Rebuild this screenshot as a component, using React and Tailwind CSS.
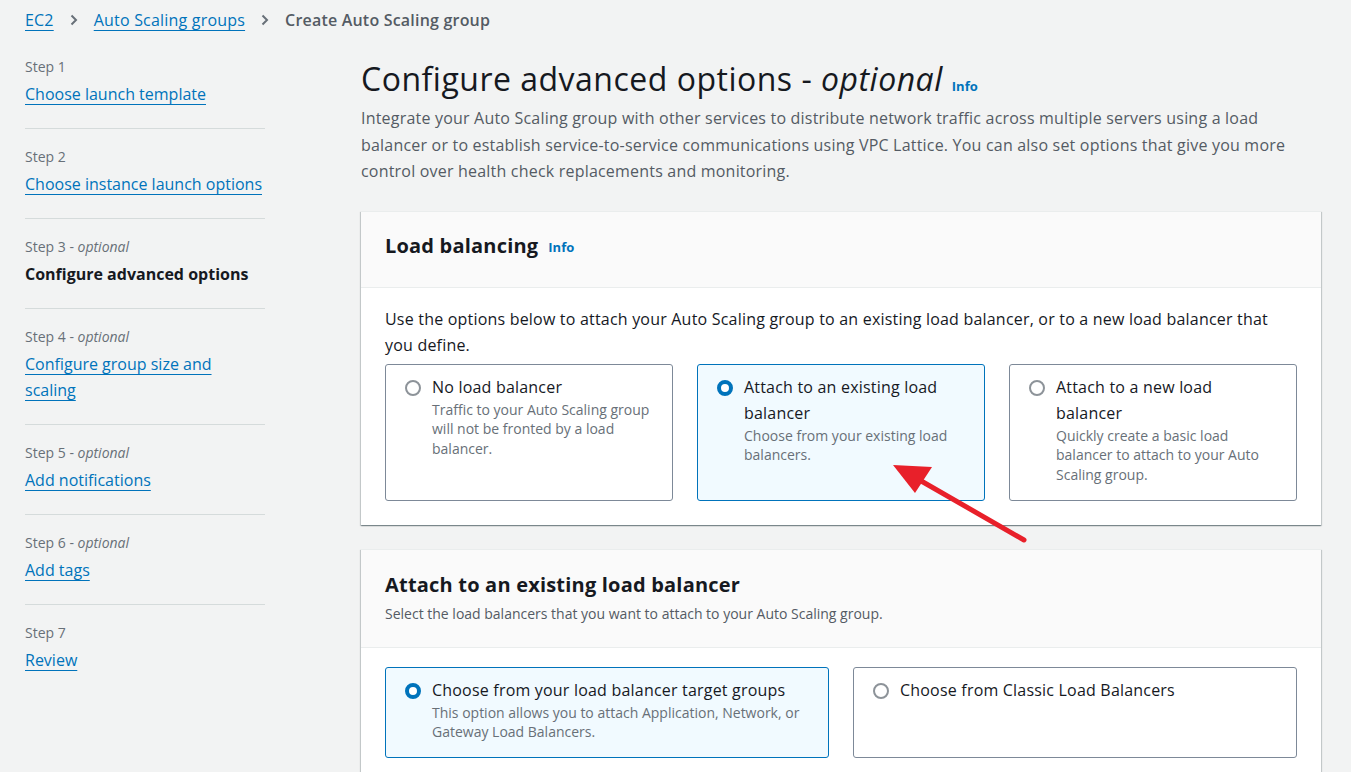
import React from 'react';

const font = { fontFamily: '"Open Sans", "Noto Sans", Arial, sans-serif' };

const steps = [
  { label: 'Step 1', title: 'Choose launch template' },
  { label: 'Step 2', title: 'Choose instance launch options' },
  { label: 'Step 3', optional: true, title: 'Configure advanced options', active: true },
  { label: 'Step 4', optional: true, title: 'Configure group size and scaling' },
  { label: 'Step 5', optional: true, title: 'Add notifications' },
  { label: 'Step 6', optional: true, title: 'Add tags' },
  { label: 'Step 7', title: 'Review' },
];

const Radio = ({ checked }) =>
  checked ? (
    <span className="mt-[6px] h-4 w-4 shrink-0 rounded-full border-[4px] border-[#0073bb] bg-white" />
  ) : (
    <span className="mt-[6px] h-4 w-4 shrink-0 rounded-full border-2 border-[#8d9399] bg-white" />
  );

const Tile = ({ checked, title, desc, className = '' }) => (
  <div
    className={`flex gap-[11px] rounded-[3px] border px-[19px] pb-[11px] pt-[9px] ${
      checked ? 'border-[#0073bb] bg-[#f1faff]' : 'border-[#7d8998] bg-white'
    } ${className}`}
  >
    <Radio checked={checked} />
    <div className="flex-1">
      <div className="text-[16px] leading-[26px] tracking-[0.2px] text-[#16191f]">{title}</div>
      {desc && <div className="text-[14px] leading-[19.5px] text-[#687078]">{desc}</div>}
    </div>
  </div>
);

const Info = ({ className = '' }) => (
  <span className={`text-[13px] font-bold tracking-normal text-[#0073bb] ${className}`}>Info</span>
);

const cardShadow =
  'border-t border-[#eaeded] bg-white shadow-[0_1px_1px_0_rgba(0,28,36,0.3),1px_1px_1px_0_rgba(0,28,36,0.15),-1px_1px_1px_0_rgba(0,28,36,0.15)]';

export default function App() {
  return (
    <div style={font} className="relative min-h-[772px] overflow-hidden bg-[#f2f3f3] text-[#16191f]">
      {/* Breadcrumb */}
      <div className="flex items-center gap-[14px] pl-[25px] pt-[8px] text-[16px] leading-[24px] tracking-[0.2px]">
        <span className="text-[#0073bb] underline underline-offset-[4px]">EC2</span>
        <svg className="h-3 w-3" viewBox="0 0 12 12" fill="none" stroke="#687078" strokeWidth="2">
          <path d="M3.5 1.5 8 6l-4.5 4.5" />
        </svg>
        <span className="text-[#0073bb] underline underline-offset-[4px]">Auto Scaling groups</span>
        <svg className="h-3 w-3" viewBox="0 0 12 12" fill="none" stroke="#687078" strokeWidth="2">
          <path d="M3.5 1.5 8 6l-4.5 4.5" />
        </svg>
        <span className="font-semibold text-[#545b64]">Create Auto Scaling group</span>
      </div>

      <div className="flex pt-[25px]">
        {/* Sidebar */}
        <nav className="ml-[25px] w-[240px] shrink-0">
          {steps.map((s, i) => (
            <div
              key={s.label}
              className={`pb-[21px] ${i > 0 ? 'pt-[18px]' : ''} ${i < steps.length - 1 ? 'border-b border-[#d5dbdb]' : ''}`}
            >
              <div className="text-[14px] leading-[20px] text-[#687078]">
                {s.label}
                {s.optional && (
                  <>
                    {' - '}
                    <i>optional</i>
                  </>
                )}
              </div>
              <div
                className={`mt-[4px] text-[16px] leading-[26px] ${
                  s.active
                    ? 'font-bold text-[#16191f]'
                    : 'text-[#0073bb] underline underline-offset-[4px]'
                }`}
              >
                {s.title}
              </div>
            </div>
          ))}
        </nav>

        {/* Main */}
        <main className="ml-[96px] w-[960px]">
          <h1 className="mt-[2px] flex items-baseline text-[32px] leading-[40px] tracking-[0.5px] text-[#16191f]">
            Configure advanced options -&nbsp;<i>optional</i>
            <Info className="ml-[9px]" />
          </h1>
          <p className="mt-[-1px] text-[16px] leading-[26.5px] tracking-[0.2px] text-[#545b64]">
            Integrate your Auto Scaling group with other services to distribute network traffic across multiple servers using a load balancer or to establish service-to-service communications using VPC Lattice. You can also set options that give you more control over health check replacements and monitoring.
          </p>

          {/* Load balancing card */}
          <section className={`mt-[26px] ${cardShadow}`}>
            <div className="flex h-[76px] items-start border-b border-[#eaeded] bg-[#fafafa] px-[24px] pt-[20px]">
              <h2 className="text-[20px] font-bold leading-[28px] tracking-[0.2px]">Load balancing</h2>
              <Info className="ml-[10px] mt-[6px]" />
            </div>
            <div className="px-[24px] pb-[24px] pt-[18px]">
              <p className="text-[16px] leading-[26px] tracking-[0.2px] text-[#16191f]">
                Use the options below to attach your Auto Scaling group to an existing load balancer, or to a new load balancer that you define.
              </p>
              <div className="mt-[6px] grid grid-cols-3 gap-[24px]">
                <Tile
                  className="h-[137px]"
                  title="No load balancer"
                  desc="Traffic to your Auto Scaling group will not be fronted by a load balancer."
                />
                <Tile
                  className="h-[137px]"
                  checked
                  title="Attach to an existing load balancer"
                  desc="Choose from your existing load balancers."
                />
                <Tile
                  className="h-[137px]"
                  title="Attach to a new load balancer"
                  desc="Quickly create a basic load balancer to attach to your Auto Scaling group."
                />
              </div>
            </div>
          </section>

          {/* Attach existing card */}
          <section className={`mt-[24px] ${cardShadow}`}>
            <div className="h-[98px] border-b border-[#eaeded] bg-[#fafafa] px-[24px] pt-[21px]">
              <h2 className="text-[20px] font-bold leading-[28px] tracking-[0.2px]">Attach to an existing load balancer</h2>
              <p className="mt-[5px] text-[14px] leading-[20px] text-[#545b64]">
                Select the load balancers that you want to attach to your Auto Scaling group.
              </p>
            </div>
            <div className="px-[24px] pb-[24px] pt-[19px]">
              <div className="grid grid-cols-2 gap-[24px]">
                <Tile
                  className="h-[91px]"
                  checked
                  title="Choose from your load balancer target groups"
                  desc="This option allows you to attach Application, Network, or Gateway Load Balancers."
                />
                <Tile className="h-[91px]" title="Choose from Classic Load Balancers" />
              </div>
            </div>
          </section>
        </main>
      </div>

      {/* Annotation arrow */}
      <svg className="pointer-events-none absolute left-0 top-0" width="1351" height="772">
        <line x1="1024" y1="540" x2="916" y2="478" stroke="#e8202a" strokeWidth="5" strokeLinecap="round" />
        <polygon points="893,465 932,467 915,493" fill="#e8202a" />
      </svg>
    </div>
  );
}
